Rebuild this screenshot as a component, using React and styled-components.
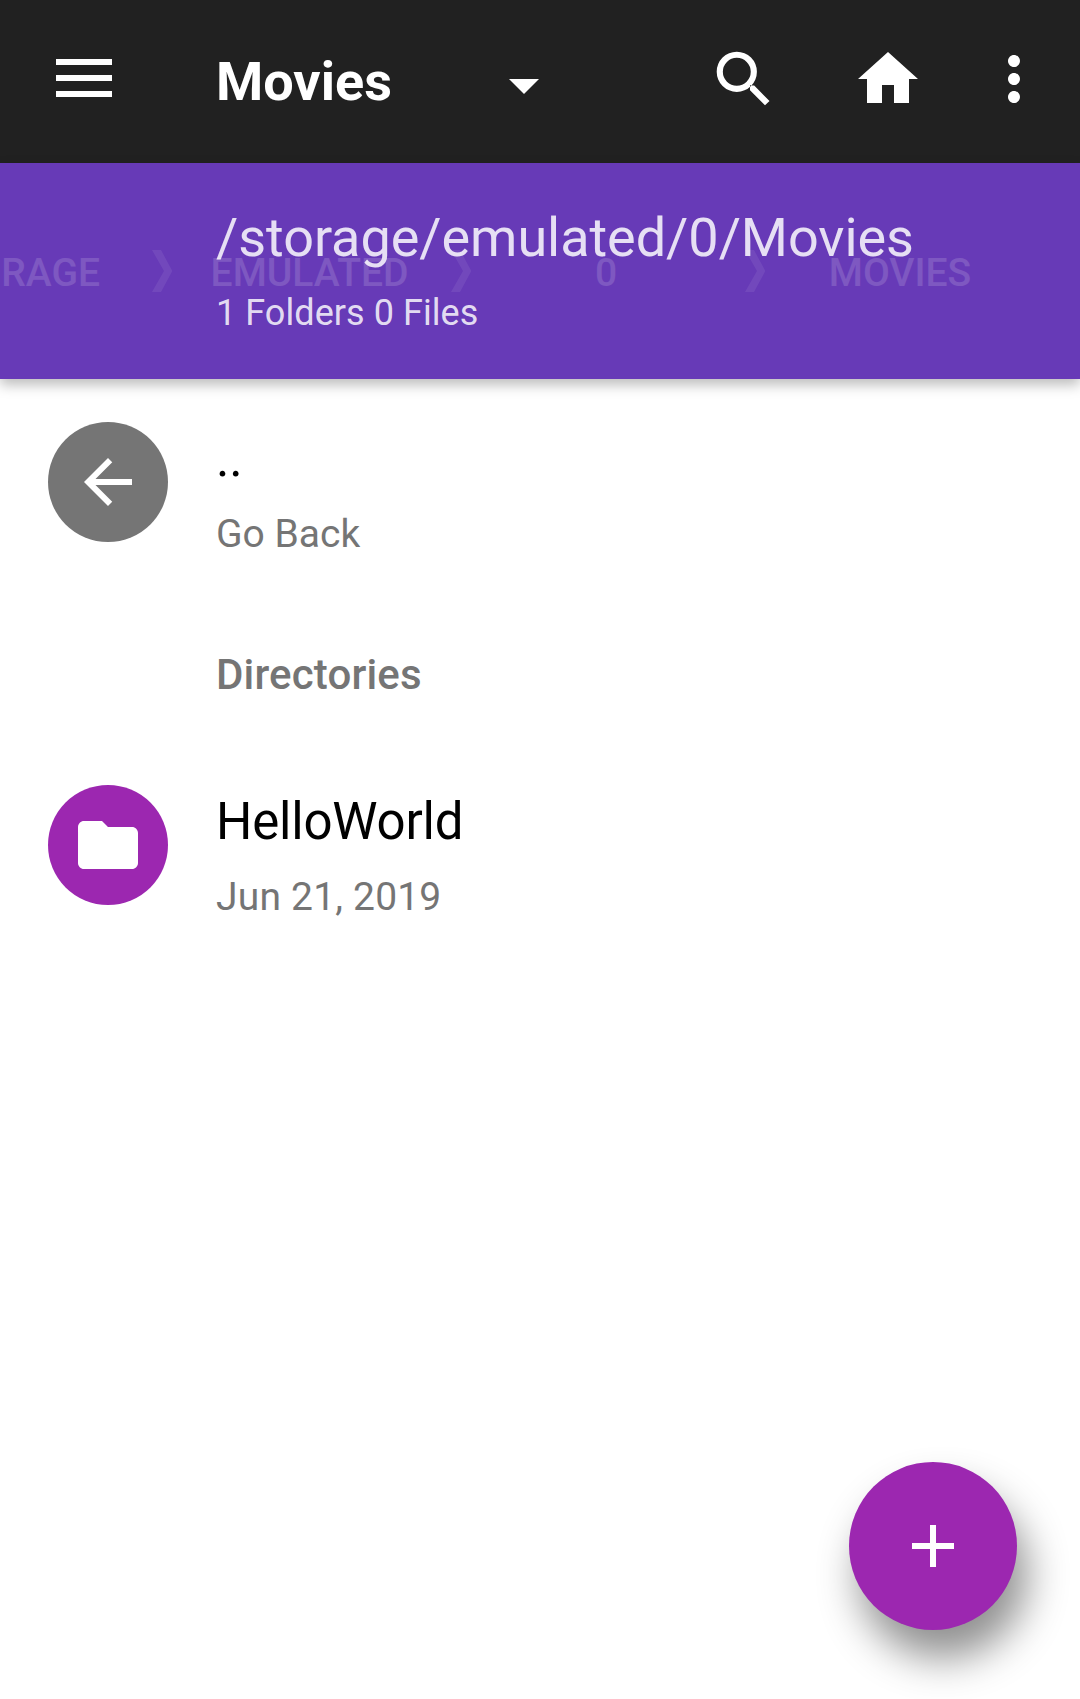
import React from "react";
import styled, { createGlobalStyle } from "styled-components";

const GlobalStyle = createGlobalStyle`
  *, *::before, *::after { box-sizing: border-box; }
  body {
    margin: 0;
    background: #fff;
    font-family: Roboto, "Noto Sans", sans-serif;
  }
`;

const Screen = styled.div`
  display: flex;
  flex-direction: column;
  width: 1080px;
  height: 1699px;
  overflow: hidden;
  background: #fff;
`;

const Toolbar = styled.header`
  display: flex;
  flex: none;
  height: 163px;
  padding: 43px 30px 0 56px;
  background: #212121;
  color: #fff;
`;

const IconButton = styled.button`
  display: block;
  flex: none;
  width: ${(p) => p.$width}px;
  height: 72px;
  margin-left: ${(p) => p.$gap || 0}px;
  padding: 0;
  border: 0;
  background: none;
  color: inherit;
`;

const Icon = styled.svg`
  display: block;
  width: ${(p) => p.$w || 72}px;
  height: ${(p) => p.$h || 72}px;
  overflow: visible;
  fill: currentColor;
`;

const Spinner = styled.div`
  display: flex;
  flex: 1;
  margin-left: 104px;
`;

const Title = styled.h1`
  width: 272px;
  margin: 0;
  padding-top: 7px;
  font-size: 54px;
  font-weight: 700;
  line-height: 64px;
`;

const PathBar = styled.section`
  display: grid;
  flex: none;
  height: 216px;
  background: #673ab7;
  box-shadow: 0 6px 12px rgba(0, 0, 0, 0.26);
`;

const Crumbs = styled.nav`
  grid-area: 1 / 1;
  display: flex;
  align-items: center;
  height: 42px;
  margin-top: 87px;
  color: #fff;
`;

const Crumb = styled.span`
  flex: none;
  width: ${(p) => p.$width}px;
  padding: 4px 4px 0 0;
  font-size: 39px;
  font-weight: 500;
  line-height: 42px;
  text-align: center;
  opacity: 0.15;
`;

const ClippedCrumb = styled(Crumb)`
  padding-right: 52px;
  text-align: right;
`;

const Separator = styled.span`
  flex: none;
  opacity: 0.07;
`;

const PathInfo = styled.div`
  grid-area: 1 / 1;
  z-index: 1;
  padding: 43px 0 0 216px;
  color: rgba(255, 255, 255, 0.84);
`;

const PathText = styled.div`
  font-size: 54px;
  letter-spacing: -0.05px;
  line-height: 64px;
  white-space: nowrap;
`;

const Counts = styled.div`
  margin-top: 22px;
  font-size: 36px;
  letter-spacing: 0.06px;
  line-height: 42px;
`;

const FileList = styled.main`
  display: flex;
  flex: 1;
  flex-direction: column;
  padding-top: 43px;
`;

const Row = styled.div`
  display: flex;
  gap: 48px;
  height: 186px;
  padding-left: 48px;
`;

const Avatar = styled.div`
  display: grid;
  flex: none;
  place-items: center;
  width: 120px;
  height: 120px;
  border-radius: 50%;
  background: ${(p) => p.$color};
  color: #fff;
`;

const RowText = styled.div`
  display: flex;
  flex-direction: column;
  padding-top: 7px;
`;

const Name = styled.div`
  color: #000;
  font-size: 51px;
  letter-spacing: -0.2px;
  line-height: 60px;
`;

const Detail = styled.div`
  margin-top: 22px;
  color: #757575;
  font-size: 39px;
  letter-spacing: ${(p) => p.$tracking || 0}px;
  line-height: 46px;
`;

const SectionTitle = styled.h2`
  height: 177px;
  margin: 0;
  padding: 42px 0 0 216px;
  color: #757575;
  font-size: 42px;
  font-weight: 500;
  letter-spacing: 0.15px;
  line-height: 50px;
`;

const Fab = styled.button`
  position: fixed;
  left: 849px;
  top: 1462px;
  display: grid;
  place-items: center;
  width: 168px;
  height: 168px;
  padding: 0;
  border: 0;
  border-radius: 50%;
  background: #9c27b0;
  color: #fff;
  box-shadow: 10px 28px 40px rgba(0, 0, 0, 0.44);
`;

const ICONS = {
  search:
    "M9.6 2.9a6.7 6.7 0 1 0 0 13.4a6.7 6.7 0 0 0 0-13.4zm0 2.05a4.65 4.65 0 1 1 0 9.3a4.65 4.65 0 0 1 0-9.3zM14 14.1l1.4.1 5.1 5.1-1.5 1.45-5-5z",
  home: "M10 20v-6h4v6h5v-8h3L12 3 2 12h3v8z",
  more: "M12 8c1.1 0 2-.9 2-2s-.9-2-2-2-2 .9-2 2 .9 2 2 2zm0 2c-1.1 0-2 .9-2 2s.9 2 2 2 2-.9 2-2-.9-2-2-2zm0 6c-1.1 0-2 .9-2 2s.9 2 2 2 2-.9 2-2-.9-2-2-2z",
  back: "M20 11H7.83l5.59-5.59L12 4l-8 8 8 8 1.41-1.41L7.83 13H20v-2z",
  folder:
    "M10 4H4c-1.1 0-1.99.9-1.99 2L2 18c0 1.1.9 2 2 2h16c1.1 0 2-.9 2-2V8c0-1.1-.9-2-2-2h-8l-2-2z",
  add: "M19 13h-6v6h-2v-6H5v-2h6V5h2v6h6v2z",
};

const MaterialIcon = ({ name }) => (
  <Icon viewBox="0 0 24 24">
    <path fillRule="evenodd" d={ICONS[name]} />
  </Icon>
);

const Chevron = () => (
  <Separator>
    <Icon $w={20} $h={42} viewBox="0 0 20 42">
      <path d="M0 0h9l11.3 21L9 42H0l12-21z" />
    </Icon>
  </Separator>
);

const Entry = ({ icon, color, name, detail, tracking }) => (
  <Row>
    <Avatar $color={color}>
      <MaterialIcon name={icon} />
    </Avatar>
    <RowText>
      <Name>{name}</Name>
      <Detail $tracking={tracking}>{detail}</Detail>
    </RowText>
  </Row>
);

export default function App() {
  return (
    <>
      <GlobalStyle />
      <Screen>
        <Toolbar>
          <IconButton $width={56} aria-label="Menu">
            <Icon $w={56} viewBox="0 0 56 72">
              <path d="M0 16h56v6H0zM0 32h56v6H0zM0 48h56v6H0z" />
            </Icon>
          </IconButton>
          <Spinner>
            <Title>Movies</Title>
            <Icon viewBox="0 0 72 72">
              <path d="M21 36h30L36 51z" />
            </Icon>
          </Spinner>
          <IconButton $width={72} aria-label="Search">
            <MaterialIcon name="search" />
          </IconButton>
          <IconButton $width={72} $gap={72} aria-label="Home">
            <MaterialIcon name="home" />
          </IconButton>
          <IconButton $width={72} $gap={54} aria-label="More">
            <MaterialIcon name="more" />
          </IconButton>
        </Toolbar>

        <PathBar>
          <Crumbs>
            <ClippedCrumb $width={152}>RAGE</ClippedCrumb>
            <Chevron />
            <Crumb $width={279}>EMULATED</Crumb>
            <Chevron />
            <Crumb $width={274}>0</Crumb>
            <Chevron />
            <Crumb $width={274}>MOVIES</Crumb>
          </Crumbs>
          <PathInfo>
            <PathText>/storage/emulated/0/Movies</PathText>
            <Counts>1 Folders 0 Files</Counts>
          </PathInfo>
        </PathBar>

        <FileList>
          <Entry icon="back" color="#757575" name=".." detail="Go Back" />
          <SectionTitle>Directories</SectionTitle>
          <Entry
            icon="folder"
            color="#9c27b0"
            name="HelloWorld"
            detail="Jun 21, 2019"
            tracking={0.2}
          />
        </FileList>
        <Fab aria-label="Add">
          <MaterialIcon name="add" />
        </Fab>
      </Screen>
    </>
  );
}
